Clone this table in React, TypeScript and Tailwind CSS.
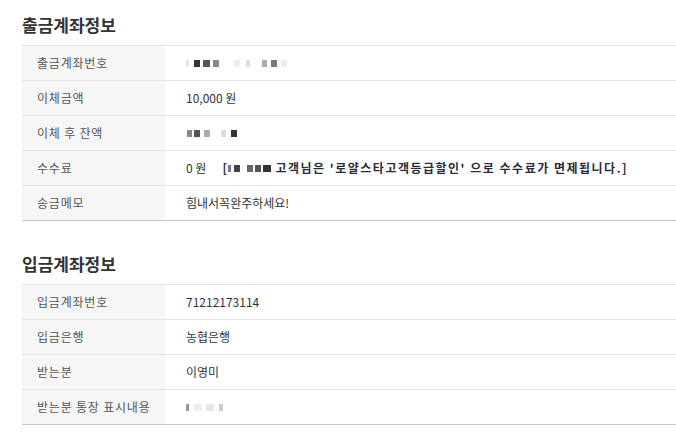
import React from "react";

type Row = { label: string; value: React.ReactNode };

// pixel-ish redaction blocks (x offset, size, shade)
const Blur = ({ blocks }: { blocks: [number, number, string][] }) => (
  <span className="relative inline-block h-[12px] align-middle" style={{ width: Math.max(...blocks.map((b) => b[0] + b[1])) }}>
    {blocks.map(([x, w, c], i) => (
      <span
        key={i}
        className="absolute top-[3px] h-[7px]"
        style={{ left: x, width: w, background: c }}
      />
    ))}
  </span>
);

const outRows: Row[] = [
  {
    label: "출금계좌번호",
    value: (
      <Blur
        blocks={[
          [0, 3, "#e4e4e4"],
          [8, 6, "#333"],
          [17, 7, "#555"],
          [27, 6, "#888"],
          [48, 6, "#eee"],
          [60, 4, "#ddd"],
          [76, 5, "#aaa"],
          [85, 6, "#777"],
          [95, 6, "#eee"],
        ]}
      />
    ),
  },
  { label: "이체금액", value: "10,000 원" },
  {
    label: "이체 후 잔액",
    value: (
      <Blur
        blocks={[
          [1, 5, "#888"],
          [8, 6, "#555"],
          [18, 6, "#aaa"],
          [35, 5, "#ddd"],
          [45, 6, "#333"],
        ]}
      />
    ),
  },
  {
    label: "수수료",
    value: (
      <span className="flex items-center">
        <span>0 원</span>
        <span className="ml-[16px] flex items-center font-bold tracking-[1.5px] text-[#2b2b3a]">
          <span>[</span>
          <Blur
            blocks={[
              [0, 3, "#8a6a9a"],
              [6, 6, "#444"],
              [19, 6, "#666"],
              [27, 6, "#555"],
              [35, 8, "#333"],
            ]}
          />
          <span className="ml-[4px]">고객님은 '로얄스타고객등급할인' 으로 수수료가 면제됩니다.]</span>
        </span>
      </span>
    ),
  },
  { label: "송금메모", value: "힘내서꼭완주하세요!" },
];

const inRows: Row[] = [
  { label: "입금계좌번호", value: "71212173114" },
  { label: "입금은행", value: "농협은행" },
  { label: "받는분", value: "이영미" },
  {
    label: "받는분 통장 표시내용",
    value: (
      <Blur
        blocks={[
          [0, 3, "#999"],
          [8, 8, "#eee"],
          [20, 8, "#e6e6e6"],
          [33, 4, "#ccc"],
        ]}
      />
    ),
  },
];

const Section = ({ title, rows }: { title: string; rows: Row[] }) => (
  <div>
    <h2 className="h-[45px] pt-[13px] pl-[22px] text-[17px] font-bold leading-[24px] text-[#333]">{title}</h2>
    <div className="ml-[22px] border-t border-[#e3e3e3]">
      {rows.map((r) => (
        <div
          key={r.label}
          className="flex h-[35px] border-b border-[#e3e3e3] last:border-[#c8c8c8]"
        >
          <div className="flex w-[143px] items-center bg-[#f6f6f6] pl-[15px] text-[12px] tracking-[0.8px] text-[#555]">
            {r.label}
          </div>
          <div className="flex flex-1 items-center pl-[21px] text-[12px] text-[#333]">{r.value}</div>
        </div>
      ))}
    </div>
  </div>
);

export default function App() {
  return (
    <div
      className="h-[440px] w-[676px] bg-white"
      style={{ fontFamily: '"Noto Sans CJK KR", "Noto Sans", sans-serif' }}
    >
      <Section title="출금계좌정보" rows={outRows} />
      <div className="h-[18px]" />
      <Section title="입금계좌정보" rows={inRows} />
    </div>
  );
}
